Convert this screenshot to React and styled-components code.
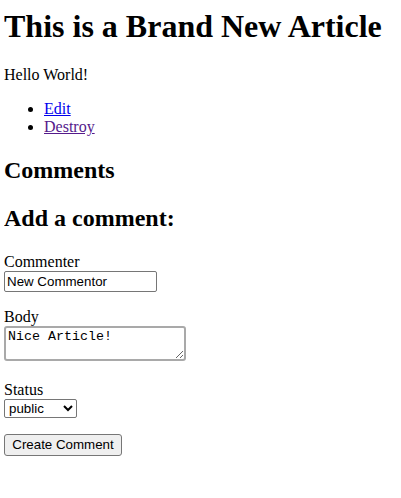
import React from "react";
import styled, { createGlobalStyle } from "styled-components";

const Global = createGlobalStyle`
  body {
    margin: 0 4px;
    font-family: "Liberation Serif", "Times New Roman", serif;
    font-size: 16px;
    color: #000;
    background: #fff;
  }
`;

const Title = styled.h1`
  font-size: 32px;
  font-weight: bold;
  margin: 7.5px 0 21.44px;
`;

const Para = styled.p`
  margin: 16px 0;
`;

const LinkList = styled.ul`
  margin: 16px 0;
  padding-left: 40px;
`;

const Link = styled.a`
  color: ${(p) => (p.$visited ? "#551a8b" : "#0000ee")};
  text-decoration: underline;
`;

const SubTitle = styled.h2`
  font-size: 24px;
  font-weight: bold;
  margin: 21px 0;
`;

const TextInput = styled.input`
  font-family: "Liberation Sans", Arial, sans-serif;
  font-size: 13.33px;
  width: 153px;
  height: 21px;
  box-sizing: border-box;
  padding: 1px 2px;
  border: 1px solid #767676;
  border-radius: 2px;
  margin: 0;
`;

const TextArea = styled.textarea`
  font-family: "Liberation Mono", "Courier New", monospace;
  font-size: 13.33px;
  width: 182px;
  height: 35px;
  box-sizing: border-box;
  padding: 1px 2px;
  border: 2px solid #a9a9a9;
  border-radius: 3px;
  margin: 0;
  outline: none;
`;

const Select = styled.select`
  font-family: "Liberation Sans", Arial, sans-serif;
  font-size: 13.33px;
  width: 73px;
  height: 19px;
  box-sizing: border-box;
  margin: 0;
  background: #fff;
  border: 1px solid #767676;
  border-radius: 2px;
`;

const Button = styled.button`
  font-family: "Liberation Sans", Arial, sans-serif;
  font-size: 13.33px;
  width: 118px;
  height: 22px;
  box-sizing: border-box;
  padding: 1px 6px;
  border: 1px solid #767676;
  border-radius: 3px;
  background: #efefef;
  margin: 0;
`;

export default function App() {
  return (
    <>
      <Global />
      <Title>This is a Brand New Article</Title>
      <Para>Hello World!</Para>
      <LinkList>
        <li><Link href="#">Edit</Link></li>
        <li><Link href="#" $visited>Destroy</Link></li>
      </LinkList>
      <SubTitle>Comments</SubTitle>
      <SubTitle>Add a comment:</SubTitle>
      <form onSubmit={(e) => e.preventDefault()}>
        <Para>
          <label>Commenter</label>
          <br />
          <TextInput type="text" defaultValue="New Commentor" />
        </Para>
        <Para>
          <label>Body</label>
          <br />
          <TextArea defaultValue="Nice Article!" />
        </Para>
        <Para>
          <label>Status</label>
          <br />
          <Select defaultValue="public">
            <option value="public">public</option>
            <option value="private">private</option>
            <option value="archived">archived</option>
          </Select>
        </Para>
        <Para>
          <Button type="submit">Create Comment</Button>
        </Para>
      </form>
    </>
  );
}
